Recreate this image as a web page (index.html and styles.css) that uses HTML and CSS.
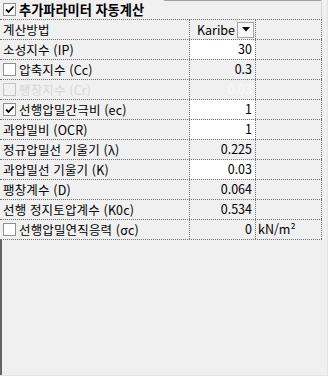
FILE: index.html
```html
<!DOCTYPE html>
<html lang="ko">
<head>
<meta charset="utf-8">
<link rel="stylesheet" href="styles.css">
</head>
<body>
<div class="panel">
  <div class="grid">
    <div class="row head">
      <div class="cell span">
        <span class="cb"><svg viewBox="0 0 11 11" width="11" height="11"><path d="M2 5.5 L4.5 8 L9.5 2.5" fill="none" stroke="#000" stroke-width="1.8"/></svg></span>
        <b>추가파라미터 자동계산</b>
      </div>
    </div>
    <div class="row">
      <div class="cell lab">계산방법</div>
      <div class="cell val combo"><span>Karibe</span><span class="btn"><svg viewBox="0 0 8 5" width="8" height="5"><path d="M0 0 H8 L4 4.5 Z" fill="#000"/></svg></span></div>
      <div class="cell"></div>
    </div>
    <div class="row">
      <div class="cell lab">소성지수 (IP)</div>
      <div class="cell val edit">30</div>
      <div class="cell"></div>
    </div>
    <div class="row">
      <div class="cell lab"><span class="cb"></span>압축지수 (Cc)</div>
      <div class="cell val">0.3</div>
      <div class="cell"></div>
    </div>
    <div class="row disabled">
      <div class="cell lab"><span class="cb off"></span>팽창지수 (Cr)</div>
      <div class="cell val">0.03</div>
      <div class="cell"></div>
    </div>
    <div class="row">
      <div class="cell lab"><span class="cb"><svg viewBox="0 0 11 11" width="11" height="11"><path d="M2 5.5 L4.5 8 L9.5 2.5" fill="none" stroke="#000" stroke-width="1.8"/></svg></span>선행압밀간극비 (ec)</div>
      <div class="cell val edit">1</div>
      <div class="cell"></div>
    </div>
    <div class="row">
      <div class="cell lab">과압밀비 (OCR)</div>
      <div class="cell val edit">1</div>
      <div class="cell"></div>
    </div>
    <div class="row">
      <div class="cell lab">정규압밀선 기울기 (λ)</div>
      <div class="cell val">0.225</div>
      <div class="cell"></div>
    </div>
    <div class="row">
      <div class="cell lab">과압밀선 기울기 (K)</div>
      <div class="cell val edit">0.03</div>
      <div class="cell"></div>
    </div>
    <div class="row">
      <div class="cell lab">팽창계수 (D)</div>
      <div class="cell val">0.064</div>
      <div class="cell"></div>
    </div>
    <div class="row">
      <div class="cell lab">선행 정지토압계수 (K0c)</div>
      <div class="cell val">0.534</div>
      <div class="cell"></div>
    </div>
    <div class="row">
      <div class="cell lab"><span class="cb"></span>선행압밀연직응력 (σc)</div>
      <div class="cell val">0</div>
      <div class="cell unit">kN/m²</div>
    </div>
  </div>
  <div class="filler"></div>
</div>
</body>
</html>
```

FILE: styles.css
```css
html, body {
  margin: 0;
  padding: 0;
}
body {
  background: #f0f0f0;
  font-family: "Noto Sans CJK KR", "Noto Sans", sans-serif;
  font-size: 12.5px;
  color: #000;
}
.panel {
  width: 328px;
  height: 376px;
  box-sizing: border-box;
  display: flex;
  flex-direction: column;
  border-right: 1px solid #e3e3e3;
  border-bottom: 1px solid #e3e3e3;
}
.grid {
  width: 322px;
}
.row {
  display: grid;
  grid-template-columns: 190px 66px 66px;
  height: 20px;
  box-sizing: border-box;
  border-bottom: 1px dotted #6e6e6e;
}
.row.head {
  grid-template-columns: 322px;
  background: linear-gradient(#a0a0a0, #a0a0a0) 164px 0 / 157px 1px no-repeat;
}
.cell {
  box-sizing: border-box;
  border-right: 1px dotted #6e6e6e;
  height: 19px;
  line-height: 18px;
  white-space: nowrap;
  overflow: hidden;
}
.span {
  display: flex;
  align-items: center;
  border-right-style: solid;
  border-right-color: #d8d8d8;
}
.span b {
  font-weight: 700;
  font-size: 13.2px;
}
.lab {
  display: flex;
  align-items: center;
  padding-left: 3px;
  letter-spacing: 0.15px;
}
.val {
  text-align: right;
  padding-right: 3px;
}
.val.edit {
  background: #fff;
}
.unit {
  padding-left: 2px;
}
.combo {
  display: flex;
  align-items: center;
  justify-content: flex-end;
  padding-right: 1px;
}
.btn {
  display: flex;
  align-items: center;
  justify-content: center;
  width: 17px;
  height: 16px;
  margin-left: 2px;
  background: #f8f8f8;
  border: 1px solid #a6a6a6;
  box-sizing: border-box;
}
.cb {
  display: inline-flex;
  align-items: center;
  justify-content: center;
  width: 13px;
  height: 13px;
  box-sizing: border-box;
  border: 1px solid #8f8f8f;
  background: #fff;
  margin-right: 3px;
  flex: none;
}
.span .cb {
  margin-left: 3px;
}
.cb.off {
  border-color: #c4c4c4;
  background: #f0f0f0;
}
.disabled .lab {
  color: #d6d6d6;
}
.disabled .val {
  color: #fafafa;
}
.filler {
  flex: 1;
  border-left: 2px solid #646464;
}
```
